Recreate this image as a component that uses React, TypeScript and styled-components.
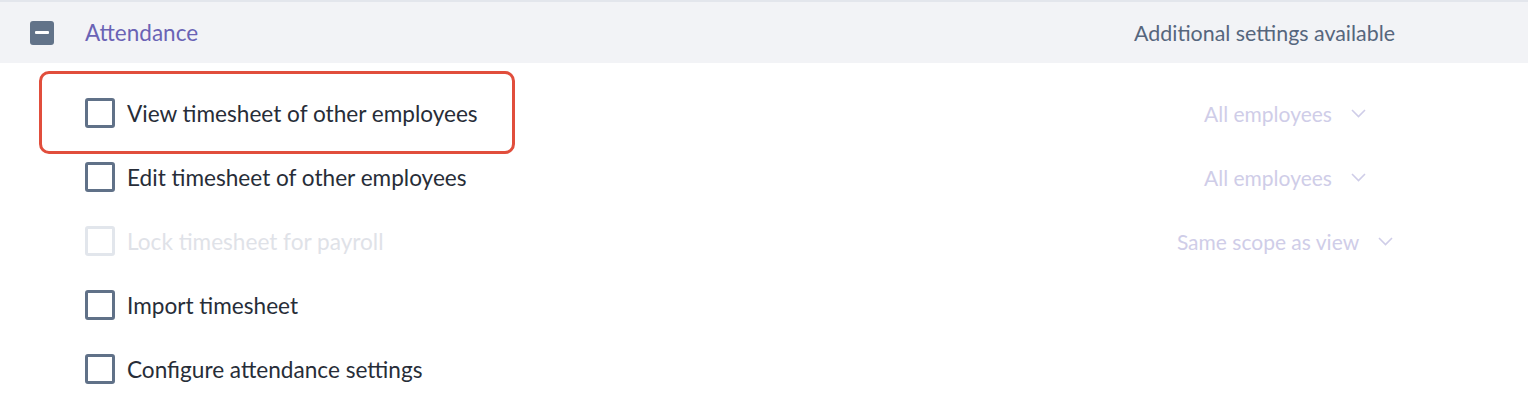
import React from "react";
import styled, { createGlobalStyle } from "styled-components";

const Global = createGlobalStyle`
  html, body { margin: 0; padding: 0; background: #ffffff; }
  body { font-family: Lato, "Noto Sans", sans-serif; -webkit-font-smoothing: antialiased; }
`;

const Page = styled.div`
  width: 1530px;
  height: 417px;
  background: #fff;
  overflow: hidden;
`;

const Header = styled.div`
  height: 61px;
  border-top: 2px solid #e3e6ec;
  background: #f2f3f6;
  display: flex;
  align-items: center;
  padding: 0 133px 0 30px;
  margin-right: 2px;
`;

const MinusBox = styled.div`
  width: 24px;
  height: 24px;
  border-radius: 3px;
  background: #627389;
  display: flex;
  align-items: center;
  justify-content: center;
  margin-right: 31px;
  &::after {
    content: "";
    width: 14px;
    height: 3px;
    border-radius: 1px;
    background: #fff;
  }
`;

const SectionTitle = styled.div`
  font-size: 22.5px;
  color: #6a63b5;
  flex: 1;
`;

const HeaderNote = styled.div`
  font-size: 21.4px;
  color: #56667d;
`;

const List = styled.div`
  display: flex;
  flex-direction: column;
  padding-top: 18px;
`;

const Row = styled.div`
  height: 64px;
  display: flex;
  align-items: center;
  padding: 0 0 0 85px;
  position: relative;
`;

const Highlight = styled.div`
  position: absolute;
  left: 39px;
  top: -10px;
  width: 476px;
  height: 83px;
  box-sizing: border-box;
  border: 3px solid #e14e3c;
  border-radius: 10px;
  pointer-events: none;
`;

const Check = styled.div<{ $disabled?: boolean }>`
  width: 30px;
  height: 30px;
  box-sizing: border-box;
  border: 3px solid ${(p) => (p.$disabled ? "#e2e6ec" : "#607188")};
  border-radius: 3px;
  margin-right: 12px;
  flex-shrink: 0;
`;

const Label = styled.div<{ $disabled?: boolean }>`
  font-size: 22.6px;
  color: ${(p) => (p.$disabled ? "#dfe2e8" : "#272d38")};
  flex: 1;
`;

const ScopeCell = styled.div`
  width: 300px;
  margin-right: 95px;
  display: flex;
  justify-content: center;
`;

const Dropdown = styled.div`
  display: flex;
  align-items: center;
  gap: 19px;
  font-size: 21px;
  color: #cfcde8;
`;

const Chevron = () => (
  <svg width="15" height="9" viewBox="0 0 15 9" fill="none">
    <path d="M1 1 L7.5 7.5 L14 1" stroke="#cfcde8" strokeWidth="1.6" />
  </svg>
);

type Item = { label: string; disabled?: boolean; scope?: string; highlight?: boolean };

const items: Item[] = [
  { label: "View timesheet of other employees", scope: "All employees", highlight: true },
  { label: "Edit timesheet of other employees", scope: "All employees" },
  { label: "Lock timesheet for payroll", scope: "Same scope as view", disabled: true },
  { label: "Import timesheet" },
  { label: "Configure attendance settings" },
];

export default function App() {
  return (
    <Page>
      <Global />
      <Header>
        <MinusBox />
        <SectionTitle>Attendance</SectionTitle>
        <HeaderNote>Additional settings available</HeaderNote>
      </Header>
      <List>
        {items.map((it) => (
          <Row key={it.label}>
            {it.highlight && <Highlight />}
            <Check $disabled={it.disabled} />
            <Label $disabled={it.disabled}>{it.label}</Label>
            <ScopeCell>
              {it.scope && (
                <Dropdown>
                  {it.scope}
                  <Chevron />
                </Dropdown>
              )}
            </ScopeCell>
          </Row>
        ))}
      </List>
    </Page>
  );
}
